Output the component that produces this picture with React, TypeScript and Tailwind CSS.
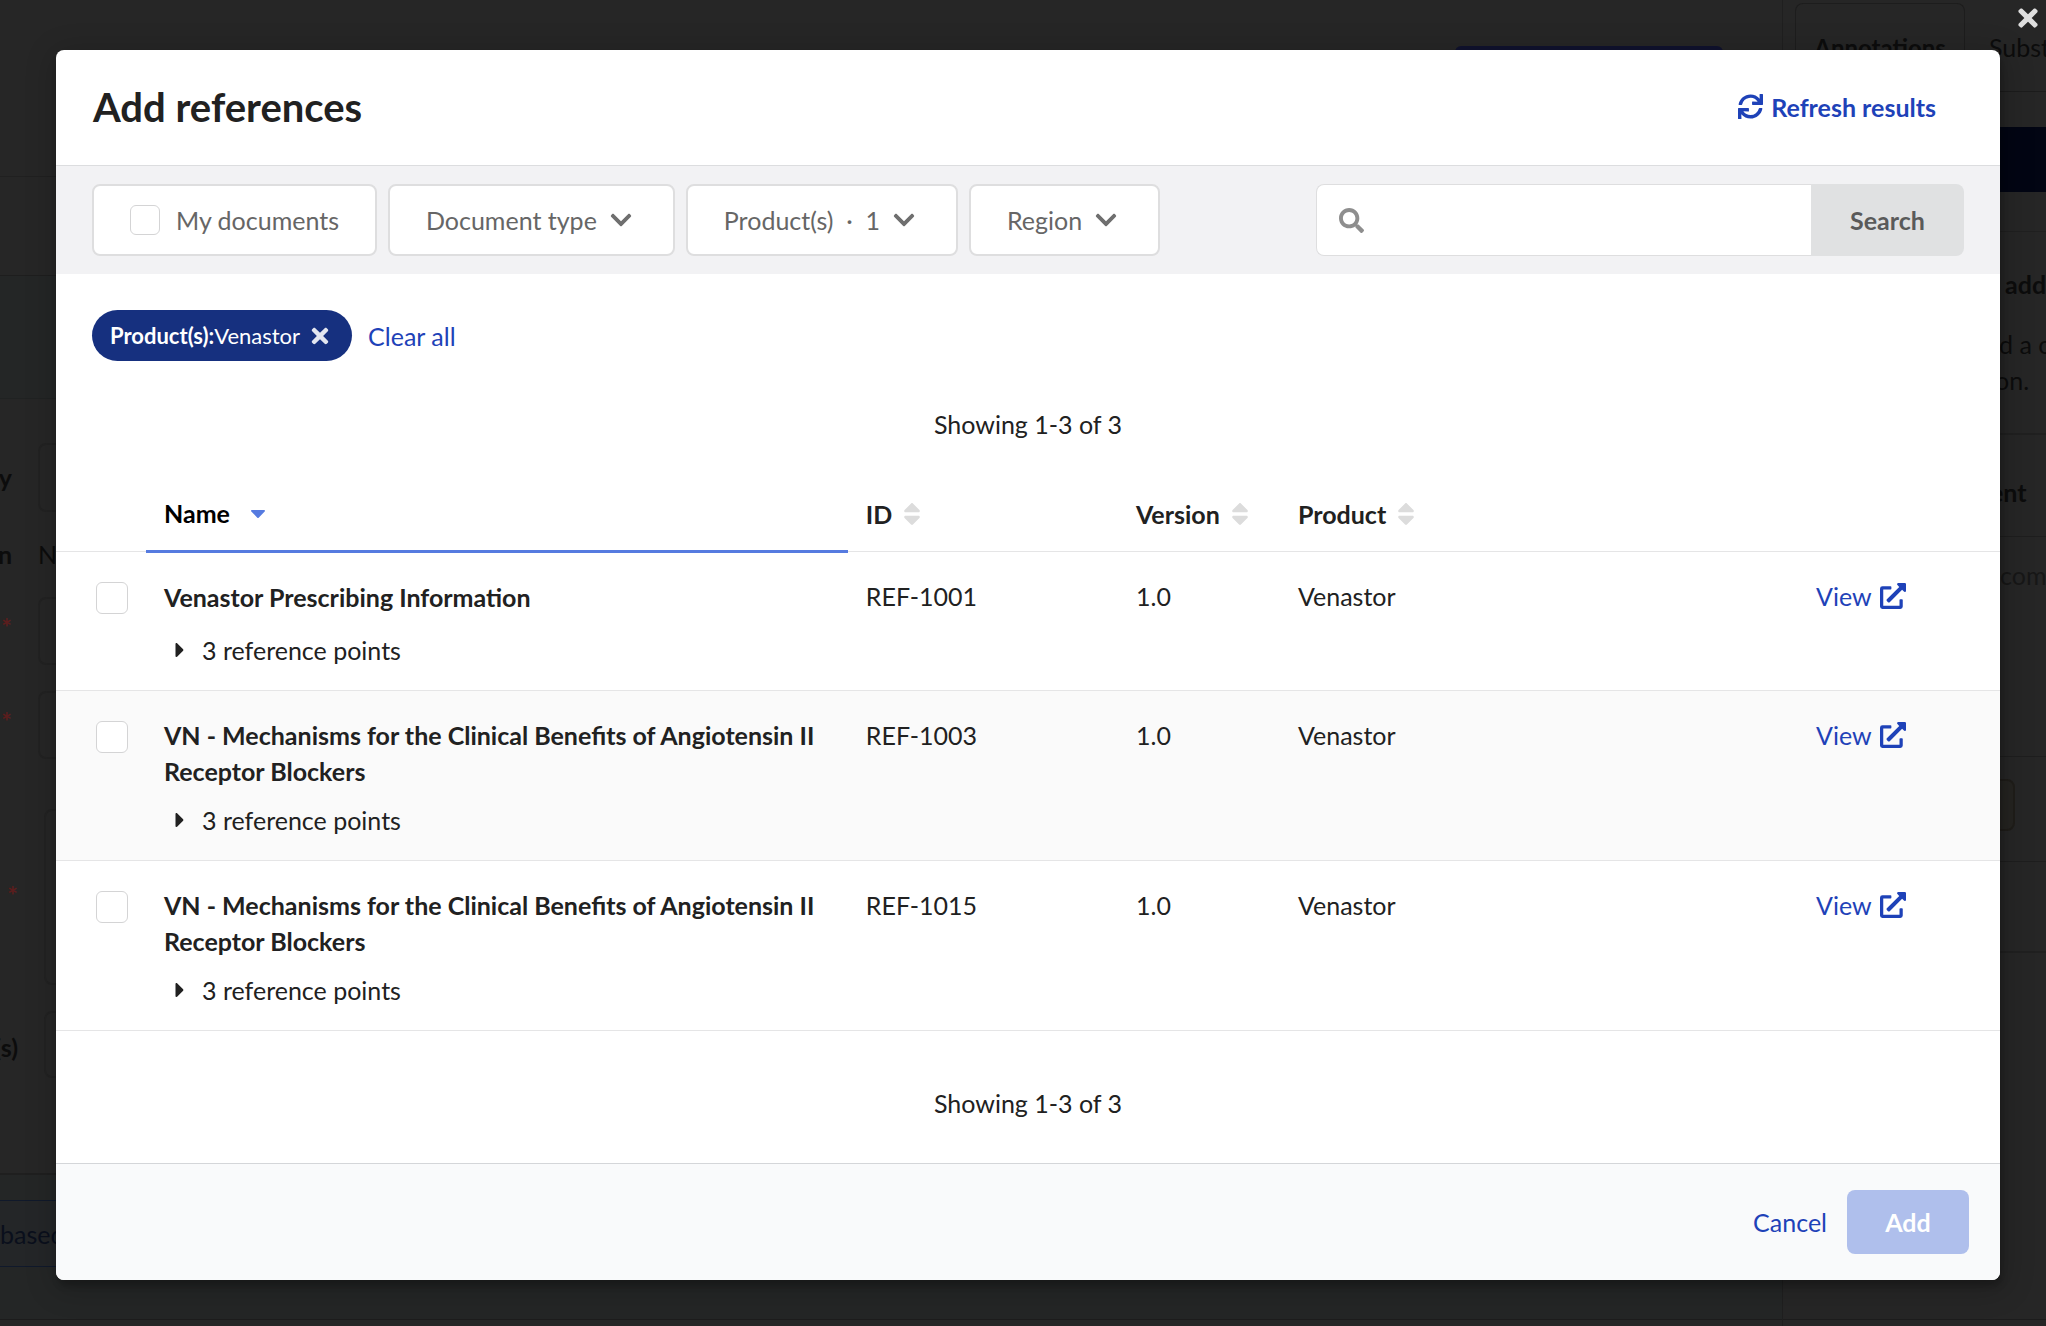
import React from 'react';
import { FaCaretDown, FaCaretRight, FaChevronDown, FaExternalLinkAlt, FaSearch, FaSort, FaSync, FaTimes } from 'react-icons/fa';

const references = [
  { id: 'REF-1001', name: 'Venastor Prescribing Information', version: '1.0', product: 'Venastor', points: 3 },
  {
    id: 'REF-1003',
    name: 'VN - Mechanisms for the Clinical Benefits of Angiotensin II Receptor Blockers',
    version: '1.0',
    product: 'Venastor',
    points: 3,
  },
  {
    id: 'REF-1015',
    name: 'VN - Mechanisms for the Clinical Benefits of Angiotensin II Receptor Blockers',
    version: '1.0',
    product: 'Venastor',
    points: 3,
  },
];

// The document page that stays dimmed behind the dialog
const PageBehind = () => (
  <div className="flex h-screen overflow-hidden bg-[#262626] text-[#0c0c0c]">
    <main className="flex min-w-0 flex-1 flex-col">
      <div className="flex h-[177px] shrink-0 items-start justify-end border-b border-[#202020] pr-[59px] pt-[46px]">
        <div className="h-12 w-[268px] rounded-md bg-[#10122e]"></div>
      </div>
      <div className="h-[99px] shrink-0 border-b border-[#1e1e1e]"></div>
      <div className="h-[123px] shrink-0 border-b border-[#202222] bg-[#242626]"></div>
      <div className="flex h-28 shrink-0 items-start gap-[26px] pt-11">
        <span className="flex w-3 justify-end pt-4 font-bold">y</span>
        <div className="h-[69px] flex-1 rounded-lg border-2 border-[#222]"></div>
      </div>
      <div className="flex h-[86px] shrink-0 items-center gap-[26px]">
        <span className="flex w-3 justify-end font-bold">n</span>
        <span>N</span>
      </div>
      <div className="flex h-[94px] shrink-0 items-start gap-[26px]">
        <span className="flex w-3 justify-end pt-3 font-bold text-[#5c1d1d]">*</span>
        <div className="h-[68px] flex-1 rounded-lg border-2 border-[#222]"></div>
      </div>
      <div className="flex h-[118px] shrink-0 items-start gap-[26px]">
        <span className="flex w-3 justify-end pt-3 font-bold text-[#5c1d1d]">*</span>
        <div className="h-[68px] flex-1 rounded-lg border-2 border-[#222]"></div>
      </div>
      <div className="flex h-[202px] shrink-0 items-start gap-[26px]">
        <span className="flex w-[18px] justify-end pt-[68px] font-bold text-[#5c1d1d]">*</span>
        <div className="h-44 flex-1 rounded-lg border-2 border-[#222]"></div>
      </div>
      <div className="flex h-[164px] shrink-0 items-start gap-[26px] border-b-2 border-[#1f1f1f]">
        <span className="flex w-[18px] justify-end pt-[18px] font-bold">(s)</span>
        <div className="h-[67px] flex-1 rounded-lg border-2 border-[#222]"></div>
      </div>
      <div className="h-[145px] shrink-0 border-b border-[#1c1c1c] bg-[#242626] pt-[25px]">
        <div className="flex h-[67px] items-center border-y border-[#10192b] bg-[#242628] text-[#0a0f1c]">based</div>
      </div>
    </main>
    <aside className="w-[264px] shrink-0 overflow-hidden whitespace-nowrap border-l border-[#1f1f1f]">
      <div className="flex h-[92px] border-b border-[#1c1c1c] pl-3 pt-[3px]">
        <div className="flex w-[170px] shrink-0 items-center justify-center rounded-t-lg border border-b-0 border-[#1d1d1d] text-2xl font-bold">
          Annotations
        </div>
        <div className="flex items-center pl-6">Substa</div>
      </div>
      <div className="h-[140px] border-b border-[#202020] pt-[35px]">
        <div className="h-[65px] bg-[#020513]"></div>
      </div>
      <div className="h-[203px] border-b-2 border-[#202020] pl-[212px] pt-[34px]">
        <p className="pl-2.5 font-bold">add</p>
        <p className="pl-1 pt-6">d a c</p>
        <p>on.</p>
      </div>
      <div className="flex h-[102px] items-center border-b border-[#1e1e1e] pl-[207px] pt-3 font-bold">ent</div>
      <div className="h-[220px] border-b border-[#1e1e1e] pl-[217px] pt-5 text-[#171717]">com</div>
      <div className="h-[105px] border-b border-[#1e1e1e] pt-[22px]">
        <div className="h-[52px] w-[232px] rounded-lg border-2 border-[#1f1d19] bg-[#252421]"></div>
      </div>
      <div className="h-[91px] border-b-2 border-[#202020]"></div>
      <div className="h-[367px] border-b border-[#1c1c1c]"></div>
    </aside>
  </div>
);

const FilterButton = ({ label }: { label: string }) => (
  <button
    type="button"
    className="flex h-[72px] items-center gap-3 whitespace-pre rounded-lg border-2 border-[#dededf] bg-white pl-9 pr-10 text-[#666]"
  >
    {label}
    <FaChevronDown className="size-6 text-[#6f6f6f]" />
  </button>
);

const ReferenceTable = () => (
  <table className="w-full table-fixed border-collapse text-left align-top">
    <colgroup>
      <col className="w-[90px]" />
      <col className="w-[36.1%]" />
      <col className="w-[13.9%]" />
      <col className="w-1/12" />
      <col />
      <col className="w-[202px]" />
    </colgroup>
    <thead>
      <tr className="h-20 border-b border-[#e5e5e6]">
        <td></td>
        <th className="border-b-[3px] border-[#567be0] px-[18px] pt-1.5 text-black">
          <span className="flex items-center gap-4">
            Name <FaCaretDown className="size-6 text-[#567be0]" />
          </span>
        </th>
        {['ID', 'Version', 'Product'].map((title) => (
          <th key={title} className="px-[18px] pt-1.5">
            <span className="flex items-center gap-1.5">
              {title} <FaSort className="size-7 text-[#dcdcdc]" />
            </span>
          </th>
        ))}
        <td></td>
      </tr>
    </thead>
    <tbody>
      {references.map((reference) => (
        <tr key={reference.id} className="border-b border-[#e5e5e6] align-top even:bg-[#fafafa]">
          <td className="pl-10 pt-[30px]">
            <input
              type="checkbox"
              aria-label={`Select ${reference.id}`}
              className="block size-8 appearance-none rounded-md border border-[#d4d4d5] bg-white"
            />
          </td>
          <td className="px-[18px] pb-[22px] pt-[26px]">
            <p className="min-h-10 font-bold">{reference.name}</p>
            <button type="button" className="mt-[13px] flex items-center gap-2.5 pl-1">
              <FaCaretRight className="size-6" />
              {reference.points} reference points
            </button>
          </td>
          <td className="px-[18px] pt-[26px]">{reference.id}</td>
          <td className="px-[18px] pt-[26px]">{reference.version}</td>
          <td className="px-[18px] pt-[26px]">{reference.product}</td>
          <td className="px-[18px] pt-[26px]">
            <a href="#" className="flex items-center gap-2 text-[#1e42b8]">
              View <FaExternalLinkAlt className="size-[26px]" />
            </a>
          </td>
        </tr>
      ))}
    </tbody>
  </table>
);

const AddReferencesDialog = () => (
  <div
    role="dialog"
    aria-labelledby="dialog-title"
    className="overflow-hidden rounded-lg bg-white shadow-[2px_6px_6px_0_rgba(0,0,0,0.2),2px_6px_30px_4px_rgba(0,0,0,0.2)]"
  >
    <header className="flex h-[116px] items-center justify-between border-b border-[#dcdddf] pb-0.5 pl-[37px] pr-16">
      <h1 id="dialog-title" className="text-[40px] font-bold leading-[48px]">
        Add references
      </h1>
      <button type="button" className="flex items-center gap-2 font-bold text-[#1e42b8]">
        <FaSync className="size-[25px]" />
        Refresh results
      </button>
    </header>

    <div className="flex items-center justify-between bg-[#f2f2f4] px-9 py-[18px]">
      <div className="flex gap-[11px]">
        <label className="flex h-[72px] items-center gap-4 rounded-lg border-2 border-[#dededf] bg-white px-9 text-[#666]">
          <input
            type="checkbox"
            className="block size-[30px] appearance-none rounded-md border border-[#d4d4d5] bg-white"
          />
          My documents
        </label>
        <FilterButton label="Document type" />
        <FilterButton label="Product(s)  ·  1" />
        <FilterButton label="Region" />
      </div>
      <form className="flex h-[72px] w-[648px] max-w-[35%]">
        <div className="flex flex-1 items-center rounded-l-lg border border-r-0 border-[#dededf] bg-white pl-[22px]">
          <FaSearch className="size-[25px] text-[#8e8e8e]" />
          <input type="search" aria-label="Search documents" className="h-full min-w-0 flex-1 px-4 outline-none" />
        </div>
        <button type="button" className="w-[153px] rounded-r-lg bg-[#e0e1e2] font-bold text-[#5a5a5a]">
          Search
        </button>
      </form>
    </div>

    <div className="flex items-center gap-4 px-9 pt-9">
      <span className="flex h-[51px] items-center rounded-full bg-[#16307f] pl-[18px] pr-5 text-[22px] text-white">
        <b>Product(s):</b>Venastor
        <button type="button" aria-label="Remove filter" className="pl-2">
          <FaTimes className="size-6 text-[#e3e6f0]" />
        </button>
      </span>
      <a href="#" className="text-[#1e42b8]">
        Clear all
      </a>
    </div>

    <p className="pb-[29px] pt-[45px] text-center">Showing 1-3 of 3</p>
    <ReferenceTable />
    <p className="pb-[42px] pt-[54px] text-center">Showing 1-3 of 3</p>

    <footer className="flex h-[117px] items-center justify-end gap-5 border-t border-[#d4d6d9] bg-[#f9fafb] pr-[31px]">
      <button type="button" className="text-[#1e42b8]">
        Cancel
      </button>
      <button type="button" className="h-16 w-[122px] rounded-lg bg-[#afbfec] font-bold text-white">
        Add
      </button>
    </footer>
  </div>
);

const App = () => {
  return (
    <div className="relative font-[Lato,sans-serif] text-[25px] leading-9 text-[#212121]">
      <PageBehind />
      <div className="absolute inset-0 pl-14 pr-[46px] pt-[50px]">
        <AddReferencesDialog />
        <button type="button" aria-label="Close" className="absolute right-1 top-1 text-[#dedede]">
          <FaTimes className="size-7" />
        </button>
      </div>
    </div>
  );
};

export default App;
